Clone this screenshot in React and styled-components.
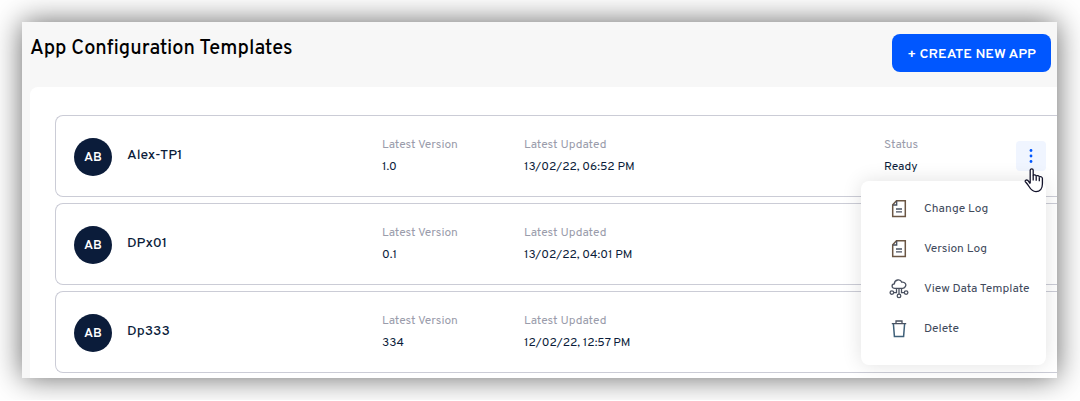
import React from "react";
import styled, { createGlobalStyle } from "styled-components";

const GlobalStyle = createGlobalStyle`
  *, *::before, *::after { box-sizing: border-box; }
  body {
    margin: 0;
    background: #ffffff;
    font-family: Overpass, Roboto, "Liberation Sans", sans-serif;
  }
  button { font-family: inherit; border: 0; cursor: pointer; }
`;

const Window = styled.main`
  margin: 22px 23px 22px 22px;
  background: #f7f7f7;
  box-shadow: 0 0 28px rgba(0, 0, 0, 0.6);
  overflow: hidden;
`;

const Header = styled.header`
  display: flex;
  justify-content: space-between;
  align-items: flex-start;
  padding: 12px 6px 15px 8px;
`;

const Title = styled.h1`
  margin: 0;
  font-size: 20px;
  line-height: 30px;
  font-weight: 500;
  color: #000000;
`;

const CreateButton = styled.button`
  height: 38px;
  padding: 2px 15px 0;
  border-radius: 8px;
  background: #0057ff;
  color: #ffffff;
  font-size: 14px;
  font-weight: 600;
`;

const Panel = styled.ul`
  display: flex;
  flex-direction: column;
  gap: 6px;
  margin: 0 0 0 8px;
  padding: 28px 0 5px 25px;
  list-style: none;
  background: #ffffff;
  border-top-left-radius: 8px;
`;

const Row = styled.li`
  display: grid;
  grid-template-columns: 308px 142px 1fr 132px 30px;
  align-items: center;
  height: 82px;
  padding: 0 11px 0 18px;
  border: 1px solid #cbccd6;
  border-right: 0;
  border-radius: 8px 0 0 8px;
`;

const Identity = styled.div`
  display: flex;
  align-items: center;
  gap: 15px;
  padding-top: 2px;
`;

const Avatar = styled.span`
  display: grid;
  place-items: center;
  width: 38px;
  height: 38px;
  padding-top: 2px;
  border-radius: 50%;
  background: #0b1c3a;
  color: #ffffff;
  font-size: 13px;
  font-weight: 600;
`;

const Name = styled.h2`
  margin: 0;
  padding-bottom: 2px;
  font-size: 14px;
  line-height: 18px;
  font-weight: 500;
  color: #0b1c3a;
`;

const Field = styled.dl`
  margin: 0;
  font-size: 12px;
  line-height: 22px;
`;

const Label = styled.dt`
  color: #9a9cab;
`;

const Value = styled.dd`
  margin: 0;
  color: #0b1c3a;
`;

const Actions = styled.div`
  position: relative;
`;

const MoreButton = styled.button`
  display: grid;
  place-items: center;
  width: 30px;
  height: 30px;
  padding: 0;
  border-radius: 4px;
  background: #f0f5ff;
`;

const Menu = styled.div`
  position: absolute;
  z-index: 1;
  top: 40px;
  right: 0;
  width: 185px;
  padding: 8px 0 16px;
  border-radius: 8px;
  background: #ffffff;
  box-shadow: 0 0 20px rgba(0, 0, 0, 0.12);
`;

const MenuItem = styled.button`
  display: flex;
  align-items: center;
  gap: 15px;
  width: 100%;
  height: 40px;
  padding: 0 0 0 28px;
  background: transparent;
  font-size: 12px;
  color: #414a5c;
  white-space: nowrap;
`;

const Pointer = styled.svg`
  position: absolute;
  z-index: 2;
  top: 27px;
  left: 8px;
  pointer-events: none;
`;

const Icon = ({ children }) => (
  <svg width="20" height="20" viewBox="0 0 20 20" fill="none" stroke="#4a5160" strokeWidth="1.3" aria-hidden="true">
    {children}
  </svg>
);

const LogIcon = () => (
  <Icon>
    <path d="M7.5 1.8H16.3V17.6H3.7V5.8Z" stroke="#6b5644" strokeWidth="1.5" />
    <path d="M7.7 2V6H4M7 10H13M7 12.8H13" />
  </Icon>
);

const CloudIcon = () => (
  <Icon>
    <path d="M6 9.4C2.3 9.4 2.2 5.2 5.3 4.9C5.5 0.4 11.4 -0.4 12.8 3.2C15.9 2.7 17.7 5.4 16.3 7.6C15.6 8.9 14.6 9.4 13.6 9.4Z" />
    <path d="M7.5 9.4V13.6H4.6M10 9.4V15M12.5 9.4V13.6H15.4" />
    <circle cx="2.9" cy="13.6" r="1.8" />
    <circle cx="17.1" cy="13.6" r="1.8" />
    <circle cx="10" cy="16.9" r="1.8" />
  </Icon>
);

const TrashIcon = () => (
  <Icon>
    <path d="M2.8 4.6H17.2M7 4.4V2H13V4.4" />
    <path d="M4.4 4.8L5.4 17.4H14.6L15.6 4.8" stroke="#3f6079" strokeWidth="1.5" />
  </Icon>
);

const menuItems = [
  { label: "Change Log", Glyph: LogIcon },
  { label: "Version Log", Glyph: LogIcon },
  { label: "View Data Template", Glyph: CloudIcon },
  { label: "Delete", Glyph: TrashIcon },
];

const templates = [
  { name: "Alex-TP1", version: "1.0", updated: "13/02/22, 06:52 PM", status: "Ready", open: true },
  { name: "DPx01", version: "0.1", updated: "13/02/22, 04:01 PM" },
  { name: "Dp333", version: "334", updated: "12/02/22, 12:57 PM" },
];

const Detail = ({ label, value }) => (
  <Field>
    <Label>{label}</Label>
    <Value>{value}</Value>
  </Field>
);

const RowActions = () => (
  <Actions>
    <MoreButton aria-label="More actions" aria-expanded="true">
      <svg width="4" height="16" viewBox="0 0 4 16" fill="#0057ff" aria-hidden="true">
        <circle cx="2" cy="2.5" r="1.4" />
        <circle cx="2" cy="8" r="1.4" />
        <circle cx="2" cy="13.5" r="1.4" />
      </svg>
    </MoreButton>
    <Menu>
      {menuItems.map(({ label, Glyph }) => (
        <MenuItem key={label}>
          <Glyph />
          {label}
        </MenuItem>
      ))}
    </Menu>
    <Pointer width="20" height="26" viewBox="0 0 20 26" fill="#ffffff" stroke="#12122a" strokeWidth="1.3" strokeLinejoin="round" aria-hidden="true">
      <path d="M6.2 15.5V2.3C6.2 0.3 9.2 0.3 9.2 2.3V7.6C9.6 6.4 12.2 6.6 12.2 8.2C12.8 7.1 15.3 7.4 15.3 9.1C16.2 8.2 18.4 8.6 18.4 10.6V16C18.4 20.5 16 23.6 12 23.6C8.5 23.6 6.8 21.6 5.2 18.8C3.8 16.4 2.6 15.2 1.4 13.8C0.6 12.6 2.2 11.4 3.8 12.4L6.2 15.5" />
      <path d="M9.2 7.5V12.5M12.2 8.5V12.8M15.3 9.5V13.2" fill="none" />
    </Pointer>
  </Actions>
);

export default function App() {
  return (
    <>
      <GlobalStyle />
      <Window>
        <Header>
          <Title>App Configuration Templates</Title>
          <CreateButton>+ CREATE NEW APP</CreateButton>
        </Header>
        <Panel>
          {templates.map((item) => (
            <Row key={item.name}>
              <Identity>
                <Avatar>AB</Avatar>
                <Name>{item.name}</Name>
              </Identity>
              <Detail label="Latest Version" value={item.version} />
              <Detail label="Latest Updated" value={item.updated} />
              {item.status && <Detail label="Status" value={item.status} />}
              {item.open && <RowActions />}
            </Row>
          ))}
        </Panel>
      </Window>
    </>
  );
}
